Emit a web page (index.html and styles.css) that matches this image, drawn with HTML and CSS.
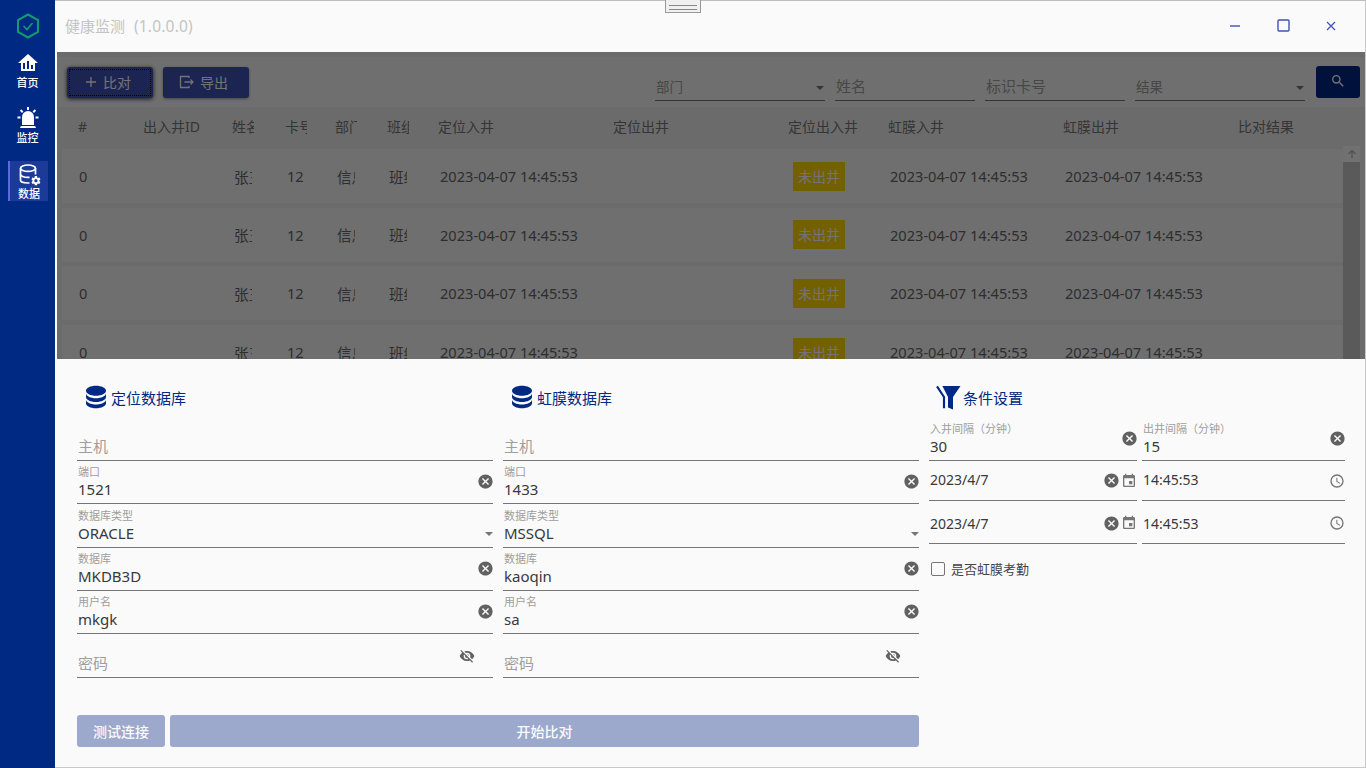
FILE: index.html
```html
<!DOCTYPE html>
<html lang="zh-CN">
<head>
  <meta charset="UTF-8">
  <title>健康监测</title>
  <link rel="stylesheet" href="styles.css">
</head>
<body>
  <svg class="sprite" width="0" height="0">
    <symbol id="i-db" viewBox="0 0 24 24"><path d="M12,3C7.58,3 4,4.79 4,7C4,9.21 7.58,11 12,11C16.42,11 20,9.21 20,7C20,4.79 16.42,3 12,3M4,9V12C4,14.21 7.58,16 12,16C16.42,16 20,14.21 20,12V9C20,11.21 16.42,13 12,13C7.58,13 4,11.21 4,9M4,14V17C4,19.21 7.58,21 12,21C16.42,21 20,19.21 20,17V14C20,16.21 16.42,18 12,18C7.58,18 4,16.21 4,14Z"/></symbol>
    <symbol id="i-clear" viewBox="0 0 24 24"><path d="M12,2C17.53,2 22,6.47 22,12C22,17.53 17.53,22 12,22C6.47,22 2,17.53 2,12C2,6.47 6.47,2 12,2M15.59,7L12,10.59L8.41,7L7,8.41L10.59,12L7,15.59L8.41,17L12,13.41L15.59,17L17,15.59L13.41,12L17,8.41L15.59,7Z"/></symbol>
    <symbol id="i-event" viewBox="0 0 24 24"><path d="M19 3h-1V1h-2v2H8V1H6v2H5c-1.11 0-2 .9-2 2v14c0 1.1.89 2 2 2h14c1.1 0 2-.9 2-2V5c0-1.1-.9-2-2-2zm0 16H5V8h14v11zM17 12h-5v5h5z"/></symbol>
    <symbol id="i-clock" viewBox="0 0 24 24"><path d="M12,20A8,8 0 0,0 20,12A8,8 0 0,0 12,4A8,8 0 0,0 4,12A8,8 0 0,0 12,20M12,2A10,10 0 0,1 22,12A10,10 0 0,1 12,22C6.47,22 2,17.5 2,12A10,10 0 0,1 12,2M12.5,7V12.25L17,14.92L16.25,16.15L11,13V7H12.5Z"/></symbol>
    <symbol id="i-eyeoff" viewBox="0 0 24 24"><path d="M11.83,9L15,12.16C15,12.11 15,12.05 15,12A3,3 0 0,0 12,9C11.94,9 11.89,9 11.83,9M7.53,9.8L9.08,11.35C9.03,11.56 9,11.77 9,12A3,3 0 0,0 12,15C12.22,15 12.44,14.97 12.65,14.92L14.2,16.47C13.53,16.8 12.79,17 12,17A5,5 0 0,1 7,12C7,11.21 7.2,10.47 7.53,9.8M2,4.27L4.28,6.55L4.73,7C3.08,8.3 1.78,10 1,12C2.73,16.39 7,19.5 12,19.5C13.55,19.5 15.03,19.2 16.38,18.66L16.81,19.08L19.73,22L21,20.73L3.27,3M12,7A5,5 0 0,1 17,12C17,12.64 16.87,13.26 16.64,13.82L19.57,16.75C21.07,15.5 22.27,13.86 23,12C21.27,7.61 17,4.5 12,4.5C10.6,4.5 9.26,4.75 8,5.2L10.17,7.35C10.74,7.13 11.35,7 12,7Z"/></symbol>
  </svg>

  <div class="app">
    <div class="handle"></div>

    <nav class="sidebar">
      <div class="logo">
        <svg width="24" height="28" viewBox="0 0 24 28" fill="none" stroke="#0f9d6f" stroke-width="2">
          <path d="M12 2.5L22 8V20L12 25.5L2 20V8Z"/>
          <path d="M7.5 14L11 17.5L16.5 11" stroke-width="1.6"/>
        </svg>
      </div>
      <a class="nav-item">
        <svg width="24" height="24" viewBox="0 0 24 24"><path d="M12 3L2 12H5V20H19V12H22L12 3M9 18H7V12H9V18M13 18H11V10H13V18M17 18H15V14H17V18Z"/></svg>
        <span>首页</span>
      </a>
      <a class="nav-item">
        <svg width="24" height="24" viewBox="0 0 24 24"><path d="M6,6.9L3.87,4.78L5.28,3.37L7.4,5.5L6,6.9M13,1V4H11V1H13M20.13,4.78L18,6.9L16.6,5.5L18.72,3.37L20.13,4.78M4.5,10.5V12.5H1.5V10.5H4.5M19.5,10.5H22.5V12.5H19.5V10.5M6,20H18A2,2 0 0,1 20,22H4A2,2 0 0,1 6,20M12,5A6,6 0 0,1 18,11V19H6V11A6,6 0 0,1 12,5Z"/></svg>
        <span>监控</span>
      </a>
      <a class="nav-item active">
        <svg width="24" height="24" viewBox="0 0 24 24">
          <g fill="none" stroke="#fff" stroke-width="1.7">
            <ellipse cx="11" cy="6.2" rx="7.5" ry="3.2"/>
            <path d="M3.5 6.2V18C3.5 19.8 6.8 21 11 21H12.5"/>
            <path d="M18.5 6.2V12.5"/>
            <path d="M3.5 12.2C3.5 14 6.8 15.4 11 15.4H12.5"/>
          </g>
          <path transform="translate(13.4 13.2) scale(.46)" d="M12,15.5A3.5,3.5 0 0,1 8.5,12A3.5,3.5 0 0,1 12,8.5A3.5,3.5 0 0,1 15.5,12A3.5,3.5 0 0,1 12,15.5M19.43,12.97C19.47,12.65 19.5,12.33 19.5,12C19.5,11.67 19.47,11.34 19.43,11L21.54,9.37C21.73,9.22 21.78,8.95 21.66,8.73L19.66,5.27C19.54,5.05 19.27,4.96 19.05,5.05L16.56,6.05C16.04,5.66 15.5,5.32 14.87,5.07L14.5,2.42C14.46,2.18 14.25,2 14,2H10C9.75,2 9.54,2.18 9.5,2.42L9.13,5.07C8.5,5.32 7.96,5.66 7.44,6.05L4.95,5.05C4.73,4.96 4.46,5.05 4.34,5.27L2.34,8.73C2.21,8.95 2.27,9.22 2.46,9.37L4.57,11C4.53,11.34 4.5,11.67 4.5,12C4.5,12.33 4.53,12.65 4.57,12.97L2.46,14.63C2.27,14.78 2.21,15.05 2.34,15.27L4.34,18.73C4.46,18.95 4.73,19.03 4.95,18.95L7.44,17.94C7.96,18.34 8.5,18.68 9.13,18.93L9.5,21.58C9.54,21.82 9.75,22 10,22H14C14.25,22 14.46,21.82 14.5,21.58L14.87,18.93C15.5,18.67 16.04,18.34 16.56,17.94L19.05,18.95C19.27,19.03 19.54,18.95 19.66,18.73L21.66,15.27C21.78,15.05 21.73,14.78 21.54,14.63L19.43,12.97Z"/>
        </svg>
        <span>数据</span>
      </a>
    </nav>

    <div class="main">
      <header class="titlebar">
        <div class="app-title">健康监测 <span class="version">(1.0.0.0)</span></div>
        <div class="win-buttons">
          <button class="win-btn"><svg width="12" height="12" viewBox="0 0 12 12"><path d="M1 6H11" stroke-width="1.4"/></svg></button>
          <button class="win-btn"><svg width="13" height="13" viewBox="0 0 13 13"><rect x="1" y="1" width="11" height="11" rx="1" stroke-width="1.4"/></svg></button>
          <button class="win-btn"><svg width="12" height="12" viewBox="0 0 12 12"><path d="M2 2L10 10M10 2L2 10" stroke-width="1.2"/></svg></button>
        </div>
      </header>

      <section class="records">
        <div class="toolbar">
          <button class="tool-btn focused">
            <svg width="14" height="14" viewBox="0 0 14 14"><path d="M7 2V12M2 7H12" stroke="#fff" stroke-width="1.3"/></svg>
            比对
          </button>
          <button class="tool-btn">
            <svg width="16" height="14" viewBox="0 0 16 14" fill="none" stroke="#fff" stroke-width="1.3"><path d="M10 3V1.5H1.5V12.5H10V11"/><path d="M5.5 7H14M11.5 4.5L14 7L11.5 9.5"/></svg>
            导出
          </button>
          <div class="filters">
            <div class="filter select w-select">部门<i class="caret"></i></div>
            <div class="filter w-text">姓名</div>
            <div class="filter w-text">标识卡号</div>
            <div class="filter select w-select">结果<i class="caret"></i></div>
          </div>
          <button class="search-btn">
            <svg width="16" height="16" viewBox="0 0 24 24" fill="#fff"><path d="M9.5,3A6.5,6.5 0 0,1 16,9.5C16,11.11 15.41,12.59 14.44,13.73L14.71,14H15.5L20.5,19L19,20.5L14,15.5V14.71L13.73,14.44C12.59,15.41 11.11,16 9.5,16A6.5,6.5 0 0,1 3,9.5A6.5,6.5 0 0,1 9.5,3M9.5,5C7,5 5,7 5,9.5C5,12 7,14 9.5,14C12,14 14,12 14,9.5C14,7 12,5 9.5,5Z"/></svg>
          </button>
        </div>

        <div class="cols table-head">
          <div>#</div><div>出入井ID</div>
          <div class="clip">姓名</div><div class="clip">卡号</div><div class="clip">部门</div><div class="clip">班组</div>
          <div>定位入井</div><div>定位出井</div><div>定位出入井</div><div>虹膜入井</div><div>虹膜出井</div><div>比对结果</div>
        </div>

        <div class="table-body">
          <div class="rows">
            <div class="cols row">
              <div class="num">0</div><div></div><div class="clip">张三</div><div class="clip">12</div><div class="clip">信息</div><div class="clip">班组</div>
              <div>2023-04-07 14:45:53</div><div></div><div><span class="badge">未出井</span></div>
              <div>2023-04-07 14:45:53</div><div>2023-04-07 14:45:53</div><div></div>
            </div>
            <div class="cols row">
              <div class="num">0</div><div></div><div class="clip">张三</div><div class="clip">12</div><div class="clip">信息</div><div class="clip">班组</div>
              <div>2023-04-07 14:45:53</div><div></div><div><span class="badge">未出井</span></div>
              <div>2023-04-07 14:45:53</div><div>2023-04-07 14:45:53</div><div></div>
            </div>
            <div class="cols row">
              <div class="num">0</div><div></div><div class="clip">张三</div><div class="clip">12</div><div class="clip">信息</div><div class="clip">班组</div>
              <div>2023-04-07 14:45:53</div><div></div><div><span class="badge">未出井</span></div>
              <div>2023-04-07 14:45:53</div><div>2023-04-07 14:45:53</div><div></div>
            </div>
            <div class="cols row">
              <div class="num">0</div><div></div><div class="clip">张三</div><div class="clip">12</div><div class="clip">信息</div><div class="clip">班组</div>
              <div>2023-04-07 14:45:53</div><div></div><div><span class="badge">未出井</span></div>
              <div>2023-04-07 14:45:53</div><div>2023-04-07 14:45:53</div><div></div>
            </div>
          </div>
          <div class="scrollbar">
            <div class="scroll-up"><svg width="10" height="10" viewBox="0 0 10 10" fill="none" stroke="#bbb" stroke-width="1.4"><path d="M5 9V1.5M1.5 5L5 1.5L8.5 5"/></svg></div>
          </div>
        </div>

        <div class="dim"></div>
      </section>

      <section class="panel">
        <div class="panel-cols">
          <div class="col">
            <h3 class="section-title"><svg class="section-icon"><use href="#i-db"/></svg>定位数据库</h3>
            <div class="field"><div class="field-text"><span class="placeholder">主机</span></div></div>
            <div class="field"><div class="field-text"><label>端口</label><span>1521</span></div><svg class="ico-clear"><use href="#i-clear"/></svg></div>
            <div class="field tall"><div class="field-text"><label>数据库类型</label><span>ORACLE</span></div><i class="caret"></i></div>
            <div class="field"><div class="field-text"><label>数据库</label><span>MKDB3D</span></div><svg class="ico-clear"><use href="#i-clear"/></svg></div>
            <div class="field"><div class="field-text"><label>用户名</label><span>mkgk</span></div><svg class="ico-clear"><use href="#i-clear"/></svg></div>
            <div class="field tall"><div class="field-text"><span class="placeholder">密码</span></div><svg class="ico-eye"><use href="#i-eyeoff"/></svg></div>
          </div>

          <div class="col">
            <h3 class="section-title"><svg class="section-icon"><use href="#i-db"/></svg>虹膜数据库</h3>
            <div class="field"><div class="field-text"><span class="placeholder">主机</span></div></div>
            <div class="field"><div class="field-text"><label>端口</label><span>1433</span></div><svg class="ico-clear"><use href="#i-clear"/></svg></div>
            <div class="field tall"><div class="field-text"><label>数据库类型</label><span>MSSQL</span></div><i class="caret"></i></div>
            <div class="field"><div class="field-text"><label>数据库</label><span>kaoqin</span></div><svg class="ico-clear"><use href="#i-clear"/></svg></div>
            <div class="field"><div class="field-text"><label>用户名</label><span>sa</span></div><svg class="ico-clear"><use href="#i-clear"/></svg></div>
            <div class="field tall"><div class="field-text"><span class="placeholder">密码</span></div><svg class="ico-eye"><use href="#i-eyeoff"/></svg></div>
          </div>

          <div class="col">
            <h3 class="section-title">
              <svg class="section-icon" viewBox="0 0 24 24">
                <path d="M7.5 3.2H22L16 12V22L12 20.4V12Z"/>
                <path d="M3.2 3.5L8.8 12V21" fill="none" stroke="#002984" stroke-width="1.7"/>
              </svg>条件设置
            </h3>
            <div class="pair">
              <div class="field"><div class="field-text"><label>入井间隔（分钟）</label><span>30</span></div><svg class="ico-clear up"><use href="#i-clear"/></svg></div>
              <div class="field"><div class="field-text"><label>出井间隔（分钟）</label><span>15</span></div><svg class="ico-clear up"><use href="#i-clear"/></svg></div>
            </div>
            <div class="pair date">
              <div class="field short"><div class="field-text"><span class="small">2023/4/7</span></div><svg class="ico-clear"><use href="#i-clear"/></svg><svg class="ico-side"><use href="#i-event"/></svg></div>
              <div class="field short"><div class="field-text"><span class="small">14:45:53</span></div><svg class="ico-side clock"><use href="#i-clock"/></svg></div>
            </div>
            <div class="pair date lower">
              <div class="field"><div class="field-text"><span class="small">2023/4/7</span></div><svg class="ico-clear"><use href="#i-clear"/></svg><svg class="ico-side"><use href="#i-event"/></svg></div>
              <div class="field"><div class="field-text"><span class="small">14:45:53</span></div><svg class="ico-side clock"><use href="#i-clock"/></svg></div>
            </div>
            <div class="check-row"><i class="checkbox"></i>是否虹膜考勤</div>
          </div>
        </div>

        <div class="actions">
          <button class="action-btn test">测试连接</button>
          <button class="action-btn start">开始比对</button>
        </div>
      </section>
    </div>
  </div>
</body>
</html>
```
FILE: styles.css
```css
* {
  box-sizing: border-box;
}
html, body {
  margin: 0;
  height: 100%;
  overflow: hidden;
}
body {
  background: #fafafa;
  font-family: "Noto Sans", "Noto Sans CJK SC", sans-serif;
  font-size: 14px;
  color: #333;
}
button {
  font-family: inherit;
  border: none;
  padding: 0;
  cursor: pointer;
}
.sprite {
  display: block;
  height: 0;
}

.app {
  display: flex;
  position: relative;
  width: 1366px;
  height: 768px;
}
.handle {
  position: absolute;
  top: 0;
  left: 665px;
  width: 36px;
  height: 13px;
  background: #f0f0f0;
  border: 1px solid #999;
  border-top: none;
}
.handle::after {
  content: "";
  display: block;
  margin: 5px 3px 0;
  height: 3px;
  border-top: 1px solid #888;
  border-bottom: 1px solid #888;
}

/* sidebar */
.sidebar {
  width: 55px;
  flex: none;
  background: #002984;
  display: flex;
  flex-direction: column;
  align-items: center;
}
.logo {
  height: 50px;
  padding-top: 12px;
  display: flex;
  justify-content: center;
}
.nav-item {
  width: 40px;
  height: 40px;
  margin-bottom: 15px;
  padding-top: 1px;
  display: flex;
  flex-direction: column;
  align-items: center;
  gap: 2px;
  color: #fff;
  font-size: 11px;
  line-height: 12px;
  font-weight: 500;
}
.nav-item svg {
  fill: #fff;
  flex: none;
}
.nav-item.active {
  margin-top: 1px;
  margin-left: 1px;
  background: #1c3a98;
  border-left: 2px solid #5c6bdc;
}

.main {
  flex: 1;
  min-width: 0;
  display: flex;
  flex-direction: column;
  border-top: 1px solid #bdbdbd;
  border-right: 1px solid #c8c8c8;
  border-bottom: 1px solid #c8c8c8;
}

/* title bar */
.titlebar {
  height: 51px;
  flex: none;
  display: flex;
  align-items: center;
  padding: 0 10px 2px;
  background: #fafafa;
}
.app-title {
  font-size: 15px;
  color: #c4c4c4;
}
.version {
  margin-left: 5px;
  font-size: 15.5px;
  letter-spacing: 0.2px;
}
.win-buttons {
  margin-left: auto;
  display: flex;
}
.win-btn {
  width: 48px;
  height: 30px;
  background: none;
  display: flex;
  align-items: center;
  justify-content: center;
}
.win-btn svg {
  fill: none;
  stroke: #3f51b5;
}

/* dimmed records page */
.records {
  position: relative;
  height: 307px;
  flex: none;
  margin-left: 2px;
  overflow: hidden;
  background: #eeeeee;
}
.dim {
  position: absolute;
  inset: 0;
  background: rgba(0, 0, 0, 0.55);
}
.toolbar {
  height: 50px;
  margin-top: 5px;
  padding: 10px 5px 0 10px;
  display: flex;
  align-items: flex-start;
  background: #f6f6f6;
}
.tool-btn {
  width: 86px;
  height: 31px;
  margin-right: 10px;
  padding: 0 5px 2px 0;
  border-radius: 3px;
  background: #3f51b5;
  color: #fff;
  font-size: 14px;
  display: flex;
  align-items: center;
  justify-content: center;
  gap: 5px;
  box-shadow: 0 1px 3px rgba(0, 0, 0, 0.4);
}
.tool-btn.focused {
  outline: 1px dotted #000;
  outline-offset: -3px;
  box-shadow: 0 1px 4px rgba(0, 0, 0, 0.8);
}
.filters {
  margin-left: auto;
  display: flex;
  gap: 10px;
  margin-top: 6px;
}
.filter {
  position: relative;
  height: 28px;
  line-height: 27px;
  padding-left: 1px;
  font-size: 15px;
  color: #9e9e9e;
  border-bottom: 1px solid #757575;
}
.filter.select {
  font-size: 13.5px;
  line-height: 29px;
}
.w-select {
  width: 170px;
}
.w-text {
  width: 140px;
}
.caret {
  width: 0;
  height: 0;
  border-left: 4px solid transparent;
  border-right: 4px solid transparent;
  border-top: 4px solid #757575;
}
.filter .caret {
  position: absolute;
  right: 1px;
  top: 13px;
}
.search-btn {
  width: 44px;
  height: 32px;
  margin-left: 11px;
  margin-top: -1px;
  border-radius: 3px;
  background: #002984;
  display: flex;
  align-items: center;
  justify-content: center;
  padding-bottom: 3px;
}

/* table */
.cols {
  display: grid;
  grid-template-columns: 65px 89px 53px 50px 52px 51px 175px 175px 100px 175px 175px 90px;
  align-items: center;
  padding-left: 16px;
  margin-left: 5px;
}
.table-head {
  height: 39px;
  padding-bottom: 1px;
  font-size: 14px;
  color: #777;
  white-space: nowrap;
}
.table-body {
  display: flex;
}
.rows {
  flex: 1;
  min-width: 0;
  padding-top: 3px;
}
.row {
  height: 54px;
  margin-bottom: 4.7px;
  background: #f7f7f7;
  color: #666;
  font-size: 14.6px;
  white-space: nowrap;
}
.row > div {
  padding-left: 2px;
}
.row > .num {
  padding-left: 1px;
}
.clip {
  width: 22px;
  overflow: hidden;
}
.row .clip {
  width: 20px;
}
.row .badge {
  display: block;
  width: 52px;
  height: 29px;
  margin-left: 3px;
  line-height: 29px;
  text-align: center;
  font-size: 14px;
  background: #ffd700;
  color: #fff;
}
.scrollbar {
  width: 17px;
  height: 220px;
  margin-right: 5px;
  flex: none;
  background: #c8c8c8;
}
.scroll-up {
  height: 16px;
  background: #fafafa;
  display: flex;
  align-items: center;
  justify-content: center;
}

/* lower panel */
.panel {
  flex: 1;
  background: #fafafa;
  padding: 24px 0 0 22px;
}
.panel-cols {
  display: grid;
  grid-template-columns: 416px 416px 416px;
  gap: 10px;
}
.section-title {
  display: flex;
  align-items: center;
  height: 30px;
  margin: 0 0 5px;
  padding: 0 0 2px 4px;
  font-size: 15px;
  font-weight: 400;
  color: #002984;
}
.section-icon {
  width: 30px;
  height: 30px;
  fill: #002984;
  flex: none;
}
.field {
  display: flex;
  align-items: center;
  height: 43px;
  border-bottom: 1px solid #757575;
}
.field.tall {
  height: 44px;
}
.field.short {
  height: 40px;
}
.field-text {
  flex: 1;
  min-width: 0;
  align-self: flex-end;
  display: flex;
  flex-direction: column;
  padding: 0 0 4px 1px;
  font-size: 15px;
  line-height: 20px;
  color: #37393b;
}
.field-text label {
  font-size: 11px;
  line-height: 13px;
  margin-bottom: 1px;
  color: #9e9e9e;
}
.placeholder {
  color: #9e9e9e;
}
.small {
  font-size: 14px;
  line-height: 20px;
  padding-bottom: 6px;
}
.lower .small {
  padding-bottom: 5px;
}
.ico-clear {
  width: 17px;
  height: 17px;
  flex: none;
  margin: 0 -1px 2px 0;
  fill: #616161;
}
.ico-clear.up {
  margin-bottom: 1px;
}
.date .ico-clear {
  margin-bottom: 0;
}
.ico-side {
  width: 16px;
  height: 16px;
  margin-left: 2px;
  flex: none;
  fill: #757575;
}
.lower svg {
  margin-top: 2px;
}
.field > .caret {
  margin: 17px 0 0;
  flex: none;
}
.ico-eye {
  width: 16px;
  height: 16px;
  flex: none;
  margin-right: 18px;
  fill: #616161;
}
.pair {
  display: grid;
  grid-template-columns: 208px 203px;
  gap: 5px;
}
.check-row {
  display: flex;
  align-items: center;
  margin-top: 15px;
  padding-left: 2px;
  font-size: 13px;
  line-height: 20px;
  color: #444;
}
.checkbox {
  width: 14px;
  height: 14px;
  margin-right: 6px;
  border: 1.5px solid #757575;
  border-radius: 2px;
}
.actions {
  display: flex;
  gap: 5px;
  width: 842px;
  margin-top: 37px;
}
.action-btn {
  height: 32px;
  border-radius: 3px;
  background: #9ca9cd;
  color: #fafafa;
  font-size: 14px;
  font-weight: 500;
}
.action-btn.test {
  width: 88px;
}
.action-btn.start {
  flex: 1;
}
```
